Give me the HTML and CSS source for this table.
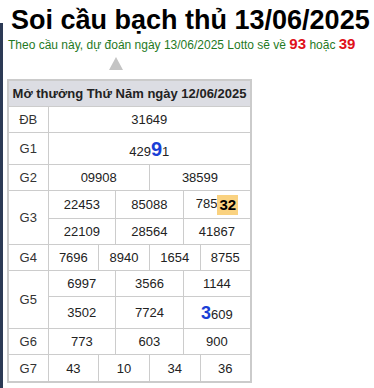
FILE: index.html
```html
<!DOCTYPE html>
<html lang="vi">
<head>
<meta charset="utf-8">
<link rel="stylesheet" href="styles.css">
</head>
<body>
<div class="page">
  <h1 class="title">Soi cầu bạch thủ 13/06/2025</h1>
  <p class="sub">Theo cầu này, dự đoán ngày 13/06/2025 Lotto sẽ về <b class="hot">93</b> hoặc <b class="hot">39</b></p>
  <div class="arrow"></div>
  <table class="kq">
    <colgroup>
      <col class="c-label">
      <col><col><col><col><col><col><col><col><col><col><col><col>
    </colgroup>
    <thead>
      <tr><th colspan="13" class="head">Mở thưởng Thứ Năm ngày 12/06/2025</th></tr>
    </thead>
    <tbody>
      <tr><td class="lbl">ĐB</td><td colspan="12">31649</td></tr>
      <tr class="tall"><td class="lbl">G1</td><td colspan="12">429<b class="blue big">9</b>1</td></tr>
      <tr><td class="lbl">G2</td><td colspan="6">09908</td><td colspan="6">38599</td></tr>
      <tr class="r28"><td class="lbl" rowspan="2">G3</td><td colspan="4">22453</td><td colspan="4">85088</td><td colspan="4">785<b class="mark">32</b></td></tr>
      <tr><td colspan="4">22109</td><td colspan="4">28564</td><td colspan="4">41867</td></tr>
      <tr><td class="lbl">G4</td><td colspan="3">7696</td><td colspan="3">8940</td><td colspan="3">1654</td><td colspan="3">8755</td></tr>
      <tr><td class="lbl" rowspan="2">G5</td><td colspan="4">6997</td><td colspan="4">3566</td><td colspan="4">1144</td></tr>
      <tr class="tall"><td colspan="4">3502</td><td colspan="4">7724</td><td colspan="4"><b class="blue mid">3</b>609</td></tr>
      <tr><td class="lbl">G6</td><td colspan="4">773</td><td colspan="4">603</td><td colspan="4">900</td></tr>
      <tr class="r27"><td class="lbl">G7</td><td colspan="3">43</td><td colspan="3">10</td><td colspan="3">34</td><td colspan="3">36</td></tr>
    </tbody>
  </table>
</div>
</body>
</html>
```

FILE: styles.css
```css
html, body {
  margin: 0;
  padding: 0;
  background: #fff;
}
body {
  font-family: "Liberation Sans", Arial, sans-serif;
  color: #222;
}
.page {
  position: relative;
  min-height: 388px;
}
.page::before {
  content: "";
  position: absolute;
  left: 0;
  top: 23px;
  bottom: 0;
  width: 3px;
  background: #2c3a55;
}
.title {
  margin: 0;
  padding: 4px 0 0 11px;
  font-size: 27px;
  line-height: 32px;
  font-weight: bold;
  color: #000;
  white-space: nowrap;
}
.sub {
  margin: 0;
  padding-left: 8px;
  font-size: 12px;
  line-height: 18px;
  color: #1f7a1f;
  white-space: nowrap;
}
.hot {
  color: #e0101a;
  font-size: 15px;
  line-height: 15px;
}
.arrow {
  width: 0;
  height: 0;
  margin: 3px 0 0 109px;
  border-left: 7px solid transparent;
  border-right: 7px solid transparent;
  border-bottom: 13px solid #c4c4c4;
}
.kq {
  margin: 9px 0 0 7px;
  width: 245px;
  table-layout: fixed;
  border-collapse: collapse;
  border: 2px solid #cbcbcb;
  font-size: 13px;
}
.c-label {
  width: 40px;
}
.kq th, .kq td {
  border: 1px solid #cccccc;
  padding: 0;
  text-align: center;
  height: 25px;
  white-space: nowrap;
}
.head {
  background: #dcdde3;
  font-weight: bold;
  color: #222;
}
.lbl {
  color: #333;
}
.tall td {
  height: 31px;
}
.r28 td {
  height: 27px;
}
.r27 td {
  height: 26px;
}
.blue {
  color: #1a3fd6;
}
.big {
  font-size: 20px;
  line-height: 20px;
}
.mid {
  font-size: 18px;
  line-height: 18px;
}
.mark {
  display: inline-block;
  background: #fad280;
  color: #000;
  font-size: 15px;
  line-height: 20px;
  padding: 0 2px;
  vertical-align: middle;
}
```
